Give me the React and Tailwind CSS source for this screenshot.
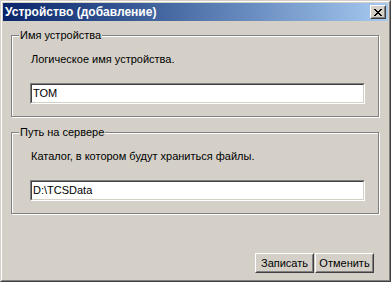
import React from "react";

const Group = ({ title, hint, value, className }) => (
  <div
    className={
      "relative ml-[8px] w-[368px] h-[82px] border border-[#808080] shadow-[1px_1px_0_#fff,inset_1px_1px_0_#fff] " +
      className
    }
  >
    <span className="absolute -top-[7px] left-[7px] px-[1px] bg-[#d4d0c8] leading-[13px]">
      {title}
    </span>
    <div className="pl-[19px] pt-[17px] leading-[13px]">{hint}</div>
    <div className="ml-[18px] mt-[17px] w-[335px] h-[21px] border border-t-[#808080] border-l-[#808080] border-b-white border-r-white">
      <div className="h-full border border-t-[#404040] border-l-[#404040] border-b-[#d4d0c8] border-r-[#d4d0c8] bg-white pl-[1px] leading-[17px]">
        {value}
      </div>
    </div>
  </div>
);

const Button = ({ children }) => (
  <div className="w-[59px] h-[20px] border border-t-white border-l-white border-b-[#404040] border-r-[#404040]">
    <div className="h-full flex items-center justify-center border border-t-[#d4d0c8] border-l-[#d4d0c8] border-b-[#808080] border-r-[#808080]">
      {children}
    </div>
  </div>
);

export default function App() {
  return (
    <div className="w-[391px] h-[282px] font-['Liberation_Sans',Arial,sans-serif] text-[11px] text-black">
      <div className="h-full border border-t-[#d4d0c8] border-l-[#d4d0c8] border-b-[#404040] border-r-[#404040]">
        <div className="h-full border border-t-white border-l-white border-b-[#808080] border-r-[#808080] bg-[#d4d0c8] p-[1px] flex flex-col">
          {/* title bar */}
          <div className="h-[18px] flex items-center justify-between bg-gradient-to-r from-[#0a246a] to-[#a6caf0] pl-[2px] pr-[2px]">
            <span className="text-white font-bold text-[12px] leading-[14px]">
              Устройство (добавление)
            </span>
            <div className="w-[16px] h-[14px] border border-t-white border-l-white border-b-[#404040] border-r-[#404040] bg-[#d4d0c8]">
              <div className="h-full flex items-center justify-center border border-t-[#d4d0c8] border-l-[#d4d0c8] border-b-[#808080] border-r-[#808080]">
                <svg width="8" height="7" viewBox="0 0 8 7" shapeRendering="crispEdges">
                  <path
                    d="M0 0h2v1h-2zM6 0h2v1h-2zM1 1h2v1h-2zM5 1h2v1h-2zM2 2h4v1h-4zM3 3h2v1h-2zM2 4h4v1h-4zM1 5h2v1h-2zM5 5h2v1h-2zM0 6h2v1h-2zM6 6h2v1h-2z"
                    fill="#000"
                  />
                </svg>
              </div>
            </div>
          </div>

          <Group
            className="mt-[14px]"
            title="Имя устройства"
            hint="Логическое имя устройства."
            value="TOM"
          />
          <Group
            className="mt-[15px]"
            title="Путь на сервере"
            hint="Каталог, в котором будут храниться файлы."
            value="D:\TCSData"
          />

          <div className="mt-[39px] mr-[14px] flex justify-end gap-[1px]">
            <Button>Записать</Button>
            <Button>Отменить</Button>
          </div>
        </div>
      </div>
    </div>
  );
}
